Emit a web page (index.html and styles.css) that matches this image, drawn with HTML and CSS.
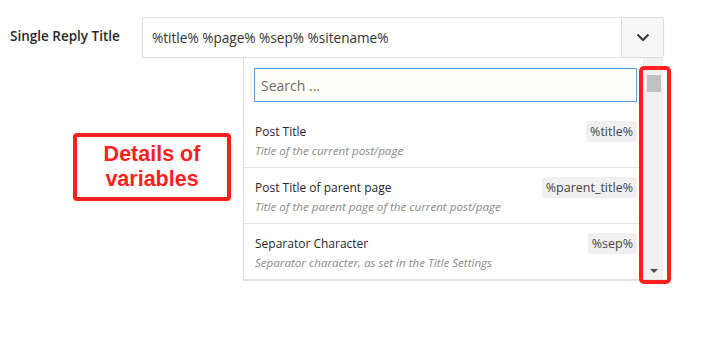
FILE: index.html
```html
<!DOCTYPE html>
<html lang="en">
<head>
    <meta charset="UTF-8">
    <title>Single Reply Title</title>
    <link rel="stylesheet" href="styles.css">
</head>
<body>
<div class="setting-row">
    <label class="setting-label" for="replyTitle">Single Reply Title</label>
    <div class="setting-field">
        <div class="title-select">
            <span class="title-value" id="replyTitle">%title% %page% %sep% %sitename%</span>
            <span class="title-toggle">
                <svg width="14" height="9" viewBox="0 0 14 9"><path d="M1.5 1.5 L7 7 L12.5 1.5" fill="none" stroke="#32373c" stroke-width="2"/></svg>
            </span>
        </div>
        <div class="var-panel">
            <div class="var-content">
                <input type="text" class="var-search" placeholder="Search ...">
                <ul class="var-list">
                    <li class="var-item">
                        <div class="var-text">
                            <div class="var-name">Post Title</div>
                            <div class="var-desc">Title of the current post/page</div>
                        </div>
                        <span class="var-tag">%title%</span>
                    </li>
                    <li class="var-item">
                        <div class="var-text">
                            <div class="var-name">Post Title of parent page</div>
                            <div class="var-desc">Title of the parent page of the current post/page</div>
                        </div>
                        <span class="var-tag">%parent_title%</span>
                    </li>
                    <li class="var-item">
                        <div class="var-text">
                            <div class="var-name">Separator Character</div>
                            <div class="var-desc">Separator character, as set in the Title Settings</div>
                        </div>
                        <span class="var-tag">%sep%</span>
                    </li>
                </ul>
            </div>
            <div class="var-scroll">
                <div class="var-thumb"></div>
                <div class="var-arrow"></div>
            </div>
        </div>
    </div>
</div>

<div class="note-box">Details of<br>variables</div>
<div class="note-ring"></div>
</body>
</html>
```

FILE: styles.css
```css
body {
    margin: 0;
    background: #ffffff;
    font-family: "Open Sans", "Liberation Sans", sans-serif;
    color: #23282d;
    position: relative;
    height: 344px;
    overflow: hidden;
}

.setting-row {
    display: flex;
    padding: 17px 0 0 10px;
}

.setting-label {
    width: 132px;
    font-size: 13.5px;
    font-weight: 600;
    line-height: 18px;
    padding-top: 10px;
    color: #23282d;
}

.setting-field {
    width: 522px;
}

.title-select {
    display: flex;
    height: 41px;
    box-sizing: border-box;
    border: 1px solid #dddddd;
    border-radius: 3px;
    box-shadow: 0 1px 2px rgba(0, 0, 0, 0.05);
    background: #ffffff;
}

.title-value {
    flex: 1;
    font-size: 13.6px;
    line-height: 39px;
    padding-left: 9px;
    color: #333333;
}

.title-toggle {
    width: 41px;
    border-left: 1px solid #dddddd;
    background: #f7f7f7;
    display: flex;
    align-items: center;
    justify-content: center;
}

.var-panel {
    display: flex;
    margin-left: 101px;
    width: 421px;
    border-left: 1px solid #dddddd;
    border-bottom: 2px solid #e2e2e2;
    background: #ffffff;
}

.var-content {
    width: 399px;
}

.var-search {
    display: block;
    box-sizing: border-box;
    width: 383px;
    height: 34px;
    margin: 10px 6px 8px 10px;
    border: 1px solid #5b9dd9;
    background: #fffef7;
    font-family: "Open Sans", "Liberation Sans", sans-serif;
    font-size: 14px;
    padding: 0 6px;
    color: #333333;
}

.var-search::placeholder {
    color: #6c6c6c;
}

.var-list {
    list-style: none;
    margin: 0;
    padding: 0;
}

.var-item {
    display: flex;
    justify-content: space-between;
    align-items: flex-start;
    padding: 12px 6px 8px 11px;
    border-top: 1px solid #e4e4e4;
}

.var-item:first-child {
    border-top: none;
    padding-top: 14px;
}

.var-name {
    font-size: 12px;
    line-height: 16px;
    color: #23282d;
}

.var-desc {
    font-size: 11.6px;
    font-style: italic;
    line-height: 16px;
    margin-top: 3px;
    color: #8a8a8a;
}

.var-tag {
    font-size: 12.5px;
    line-height: 21px;
    padding: 0 4px;
    margin-top: -3px;
    border-radius: 3px;
    background: #f0f0f0;
    color: #444444;
}

.var-scroll {
    width: 20px;
    background: #f0f0f0;
    position: relative;
}

.var-thumb {
    margin: 17px 0 0 4px;
    width: 14px;
    height: 17px;
    background: #c1c1c1;
}

.var-arrow {
    position: absolute;
    left: 7px;
    bottom: 6px;
    width: 0;
    height: 0;
    border-left: 4px solid transparent;
    border-right: 4px solid transparent;
    border-top: 4px solid #505050;
}

/* annotations drawn over the screenshot */
.note-box {
    position: absolute;
    left: 73px;
    top: 133px;
    width: 158px;
    height: 68px;
    box-sizing: border-box;
    border: 4px solid #ff1f1f;
    border-radius: 4px;
    font-family: "Liberation Sans", Arial, sans-serif;
    font-weight: bold;
    font-size: 21.5px;
    line-height: 25px;
    color: #ff1f1f;
    text-align: center;
    padding-top: 5px;
}

.note-ring {
    position: absolute;
    left: 639px;
    top: 66px;
    width: 32px;
    height: 218px;
    box-sizing: border-box;
    border: 4px solid #ff1f1f;
    border-radius: 5px;
}
```
